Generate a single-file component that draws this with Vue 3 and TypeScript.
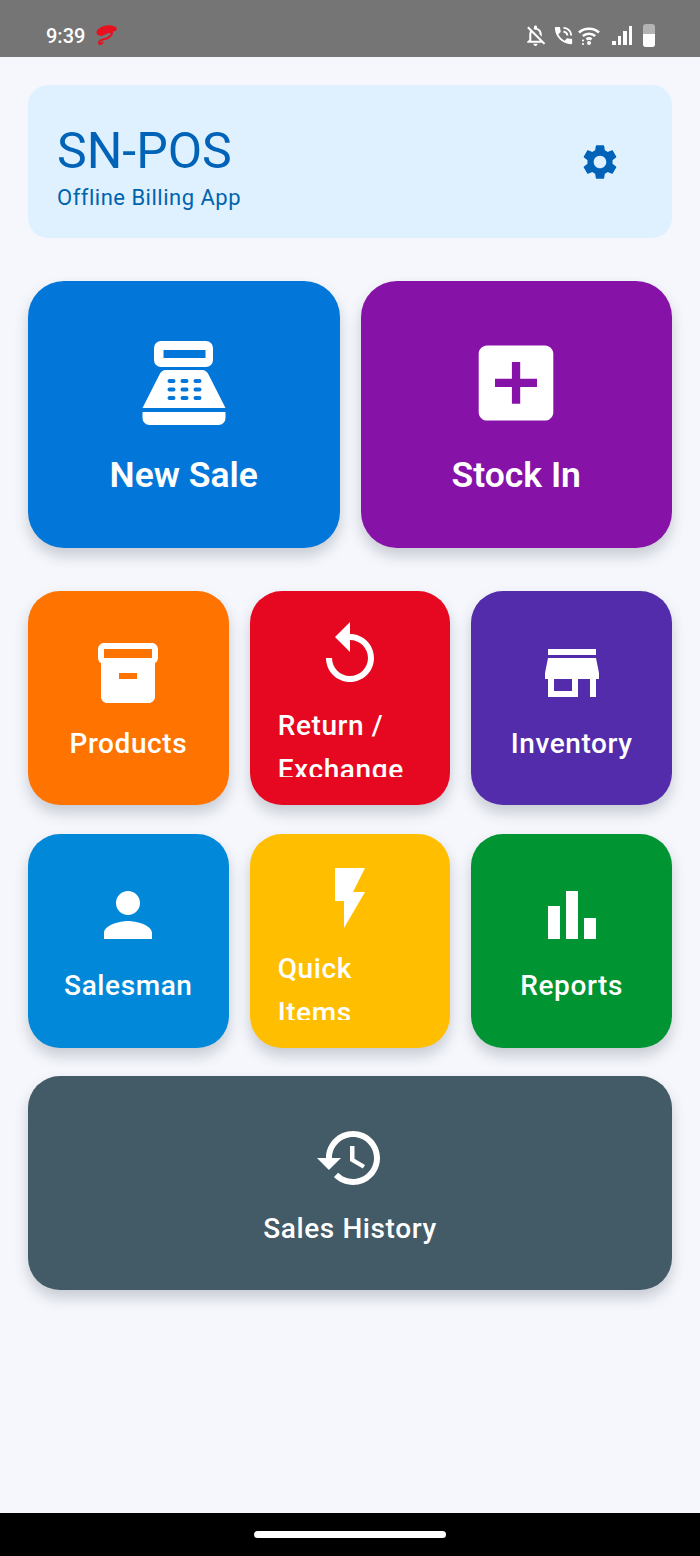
<template>
  <div class="screen">
    <div class="status-bar">
      <span class="clock">9:39</span>
      <svg class="carrier" viewBox="0 0 24 24">
        <path class="swoosh" d="M20.500 4.800C15 2.600 9 3.500 5.600 6.800c-1.800 2 0 3.500 2.500 2.500 3.300-1.300 6-3 9-2.300" />
        <path class="hook" d="M17 7.500c2.500 1.500-.8 6.500-6 7.500-3 .6-5.500 1-6 4-.1 1.600 2 1.500 3.500-.5" />
      </svg>
      <div class="status-icons">
        <svg class="st-bell" viewBox="0 0 24 24"><path :d="bellOff" /></svg>
        <svg class="st-phone" viewBox="0 0 24 24"><path :d="phoneTalk" /></svg>
        <svg class="st-wifi" viewBox="0 0 22 22">
          <path class="arc" d="M1 7.500C6.500 2.400 15.500 2.400 21 7.500M4.800 11c3.500-3 8.900-3 12.400 0M8.400 14.400c1.600-1.200 3.600-1.200 5.200 0" />
          <circle cx="11" cy="18" r="2" />
          <circle cx="5" cy="15.500" r="1.100" />
          <circle cx="5" cy="19" r="1.100" />
        </svg>
        <div class="signal">
          <i v-for="h in signalBars" :key="h" :style="{ height: h + 'px' }"></i>
        </div>
        <div class="battery"><i></i></div>
      </div>
    </div>

    <main class="content">
      <header class="app-card">
        <div class="brand">
          <h1>SN-POS</h1>
          <p>Offline Billing App</p>
        </div>
        <svg class="gear" viewBox="0 0 24 24"><path :d="gear" /></svg>
      </header>

      <section class="big-row">
        <button v-for="t in bigTiles" :key="t.label" class="tile big" :style="{ background: t.color }">
          <svg class="big-icon" viewBox="0 0 100 100"><path fill-rule="evenodd" :d="t.path" /></svg>
          <span class="big-label">{{ t.label }}</span>
        </button>
      </section>

      <section class="small-grid">
        <button v-for="t in smallTiles" :key="t.label" class="tile small" :style="{ background: t.color }">
          <span class="tile-body">
            <svg class="small-icon" viewBox="0 0 24 24"><path :d="t.path" /></svg>
            <span class="small-label">{{ t.label }}</span>
          </span>
        </button>
        <button class="tile small wide">
          <span class="tile-body">
            <svg class="small-icon" viewBox="0 0 24 24"><path :d="history" /></svg>
            <span class="small-label">Sales History</span>
          </span>
        </button>
      </section>
    </main>

    <div class="nav-bar"><span class="home-pill"></span></div>
  </div>
</template>

<script setup lang="ts">
interface Tile {
  label: string
  color: string
  path: string
}

const bellOff =
  'M12 22c1.100 0 2-.9 2-2h-4c0 1.100.9 2 2 2zm0-15.500c2.490 0 4 2.020 4 4.500v.1l2 2V11c0-3.070-1.630-5.640-4.500-6.320V4c0-.83-.67-1.500-1.500-1.500s-1.500.67-1.500 1.500v.68c-.24.06-.47.15-.69.23l1.640 1.640c.18-.02.36-.05.55-.05zM5.410 3.350 4 4.760l2.810 2.810C6.290 8.570 6 9.740 6 11v5l-2 2v1h14.240l1.740 1.740 1.410-1.410L5.410 3.350zM16 17H8v-6c0-.68.12-1.320.34-1.900L16 16.760V17z'
const phoneTalk =
  'M20 15.500c-1.250 0-2.450-.2-3.570-.57-.35-.11-.74-.03-1.020.24l-2.200 2.200c-2.830-1.440-5.150-3.750-6.590-6.590l2.200-2.210c.28-.26.36-.65.25-1C8.700 6.450 8.500 5.250 8.500 4c0-.55-.45-1-1-1H4c-.55 0-1 .45-1 1 0 9.390 7.610 17 17 17 .55 0 1-.45 1-1v-3.500c0-.55-.45-1-1-1zM19 12h2c0-4.970-4.030-9-9-9v2c3.870 0 7 3.130 7 7zm-4 0h2c0-2.760-2.240-5-5-5v2c1.660 0 3 1.340 3 3z'
const gear =
  'M19.140 12.940c.04-.3.06-.61.06-.94 0-.32-.02-.64-.07-.94l2.030-1.580c.18-.14.23-.41.12-.61l-1.920-3.320c-.12-.22-.37-.29-.59-.22l-2.390.96c-.5-.38-1.030-.7-1.620-.94l-.36-2.540c-.04-.24-.24-.41-.48-.41h-3.840c-.24 0-.43.17-.47.41l-.36 2.540c-.59.24-1.130.57-1.620.94l-2.390-.96c-.22-.08-.47 0-.59.22L2.740 8.870c-.12.21-.08.47.12.61l2.030 1.580c-.05.3-.09.63-.09.94s.02.64.07.94l-2.030 1.580c-.18.14-.23.41-.12.61l1.920 3.320c.12.22.37.29.59.22l2.390-.96c.5.38 1.030.7 1.620.94l.36 2.540c.05.24.24.41.48.41h3.840c.24 0 .44-.17.47-.41l.36-2.540c.59-.24 1.130-.56 1.620-.94l2.390.96c.22.08.47 0 .59-.22l1.920-3.320c.12-.22.07-.47-.12-.61l-2.010-1.580zM12 15.600c-1.980 0-3.600-1.620-3.600-3.600s1.620-3.600 3.600-3.600 3.600 1.620 3.600 3.600-1.620 3.600-3.600 3.600z'
const history =
  'M13 3c-4.970 0-9 4.030-9 9H1l3.890 3.890.07.14L9 12H6c0-3.870 3.130-7 7-7s7 3.130 7 7-3.130 7-7 7c-1.930 0-3.680-.79-4.940-2.060l-1.420 1.420C8.270 19.990 10.510 21 13 21c4.970 0 9-4.030 9-9s-4.030-9-9-9zm-1 5v5l4.280 2.540.72-1.210-3.500-2.080V8H12z'

const signalBars = [4, 9, 14, 19]

// keypad of the register, three by three, cut out of the body
const keypad = [48, 56.5, 65]
  .flatMap((y) =>
    [37.5, 50.5, 63.5].map(
      (x) => `M${x - 2} ${y - 2}h4a2 2 0 0 1 0 4h-4a2 2 0 0 1 0-4z`,
    ),
  )
  .join('')

const register =
  'M27 8h45a7 7 0 0 1 7 7v12a7 7 0 0 1-7 7H27a7 7 0 0 1-7-7V15a7 7 0 0 1 7-7z' +
  'M29.500 17v8h42v-8z' +
  'M32 37h36c3 0 5 1.500 6.500 4.500L91.500 75h-83l17-33.500C27 38.500 29 37 32 37z' +
  keypad +
  'M8.500 79h83v6a7 7 0 0 1-7 7h-69a7 7 0 0 1-7-7z'

const addBox =
  'M79 12.500H21c-4.600 0-8.300 3.700-8.300 8.300v58.400c0 4.600 3.700 8.300 8.300 8.300h58c4.600 0 8.300-3.700 8.300-8.300V20.800c0-4.600-3.700-8.300-8.300-8.300zM71 54H54.200v16.800h-8.300V54H29v-8.300h16.900V29h8.300v16.700H71z'

const bigTiles: Tile[] = [
  { label: 'New Sale', color: '#0277d9', path: register },
  { label: 'Stock In', color: '#8612a8', path: addBox },
]

const smallTiles: Tile[] = [
  {
    label: 'Products',
    color: '#ff7300',
    path: 'M20 2H4c-1 0-2 .9-2 2v3c0 .72.43 1.340 1 1.690V20c0 1.100 1.100 2 2 2h14c.9 0 2-.9 2-2V8.700c.57-.35 1-.97 1-1.690V4c0-1.100-1-2-2-2zm-5 12H9v-2h6v2zm5-7H4V4l16-.02V7z',
  },
  {
    label: 'Return / Exchange',
    color: '#e50820',
    path: 'M12 5V1L7 6l5 5V7c3.310 0 6 2.690 6 6s-2.690 6-6 6-6-2.690-6-6H4c0 4.420 3.580 8 8 8s8-3.580 8-8-3.580-8-8-8z',
  },
  {
    label: 'Inventory',
    color: '#522cab',
    path: 'M20 4H4v2h16V4zm1 10v-2l-1-5H4l-1 5v2h1v6h10v-6h4v6h2v-6h1zm-9 4H6v-4h6v4z',
  },
  {
    label: 'Salesman',
    color: '#0288d9',
    path: 'M12 12c2.210 0 4-1.790 4-4s-1.790-4-4-4-4 1.790-4 4 1.790 4 4 4zm0 2c-2.670 0-8 1.340-8 4v2h16v-2c0-2.660-5.330-4-8-4z',
  },
  {
    label: 'Quick Items',
    color: '#ffbf00',
    path: 'M7 2v11h3v9l7-12h-4l4-8z',
  },
  {
    label: 'Reports',
    color: '#009432',
    path: 'M4 9h4v11H4zm12 4h4v7h-4zm-6-9h4v16h-4z',
  },
]
</script>

<style scoped>
.screen {
  width: 700px;
  min-height: 1556px;
  display: flex;
  flex-direction: column;
  background: #f5f7fc;
  font-family: Roboto, 'Liberation Sans', sans-serif;
}

.status-bar {
  height: 57px;
  background: #757575;
  display: flex;
  align-items: center;
  padding: 14px 45px 0 46px;
  box-sizing: border-box;
  color: #fff;
}

.clock {
  font-size: 20px;
  font-weight: 500;
}

.carrier {
  width: 24px;
  height: 24px;
  margin-left: 9px;
  fill: none;
  stroke: #e8101f;
  stroke-linecap: round;
}

.swoosh {
  stroke-width: 4.500;
}

.hook {
  stroke-width: 2;
}

.status-icons {
  margin-left: auto;
  display: flex;
  align-items: center;
  fill: #fff;
}

.st-bell {
  width: 25px;
  height: 25px;
}

.st-phone {
  width: 23px;
  height: 23px;
  margin-left: 4px;
}

.st-wifi {
  width: 22px;
  height: 22px;
  margin-left: 3px;
}

.arc {
  fill: none;
  stroke: #fff;
  stroke-width: 2.600;
}

.signal {
  display: flex;
  align-items: flex-end;
  gap: 2px;
  height: 19px;
  margin-left: 12px;
}

.signal i {
  width: 3.500px;
  background: #fff;
}

.battery {
  width: 12px;
  height: 23px;
  margin-left: 11px;
  border-radius: 3px;
  background: #b4b4b4;
  display: flex;
  align-items: flex-end;
  overflow: hidden;
}

.battery i {
  width: 100%;
  height: 13px;
  background: #fff;
}

.content {
  flex: 1;
  padding: 28px 28px 0;
}

.app-card {
  height: 153px;
  box-sizing: border-box;
  padding: 0 51px 0 29px;
  border-radius: 20px;
  background: #dff1ff;
  display: flex;
  align-items: center;
  justify-content: space-between;
}

.brand {
  margin-top: 9px;
}

h1 {
  margin: 0;
  font-size: 50px;
  font-weight: 400;
  line-height: 60px;
  color: #0063b8;
}

p {
  margin: 3px 0 0;
  font-size: 22px;
  line-height: 28px;
  letter-spacing: 0.5px;
  color: #0063ad;
}

.gear {
  width: 42px;
  height: 42px;
  fill: #0063b8;
}

.big-row {
  display: grid;
  grid-template-columns: 1fr 1fr;
  gap: 21px;
  margin-top: 43px;
}

.tile {
  border: none;
  padding: 0;
  color: #fff;
  font-family: inherit;
  box-shadow: 0 8px 14px rgba(40, 50, 70, 0.22);
}

.big {
  height: 267px;
  border-radius: 36px;
  display: flex;
  flex-direction: column;
  align-items: center;
  justify-content: center;
}

.big-icon {
  width: 100px;
  height: 100px;
  fill: #fff;
}

.big-label {
  margin-top: 21px;
  font-size: 35.500px;
  font-weight: 600;
  line-height: 42px;
}

.small-grid {
  display: grid;
  grid-template-columns: repeat(3, 1fr);
  column-gap: 21px;
  row-gap: 28.500px;
  margin-top: 43px;
}

.small {
  height: 214px;
  border-radius: 32px;
  padding: 28px;
  box-sizing: border-box;
}

.wide {
  grid-column: 1 / -1;
  background: #435b67;
}

/* two-line labels run past the bottom edge and get cut off */
.tile-body {
  height: 158px;
  display: flex;
  flex-direction: column;
  align-items: center;
  justify-content: safe center;
  overflow: hidden;
}

.small-icon {
  width: 72px;
  height: 72px;
  flex: none;
  fill: #fff;
}

.small-label {
  flex: none;
  margin: 13px 0 -6px;
  font-size: 28px;
  font-weight: 500;
  line-height: 44px;
  letter-spacing: 0.6px;
  text-align: left;
}

.nav-bar {
  height: 43px;
  background: #000;
  display: flex;
  justify-content: center;
  padding-top: 18px;
  box-sizing: border-box;
}

.home-pill {
  width: 192px;
  height: 7px;
  border-radius: 4px;
  background: #fff;
}
</style>
